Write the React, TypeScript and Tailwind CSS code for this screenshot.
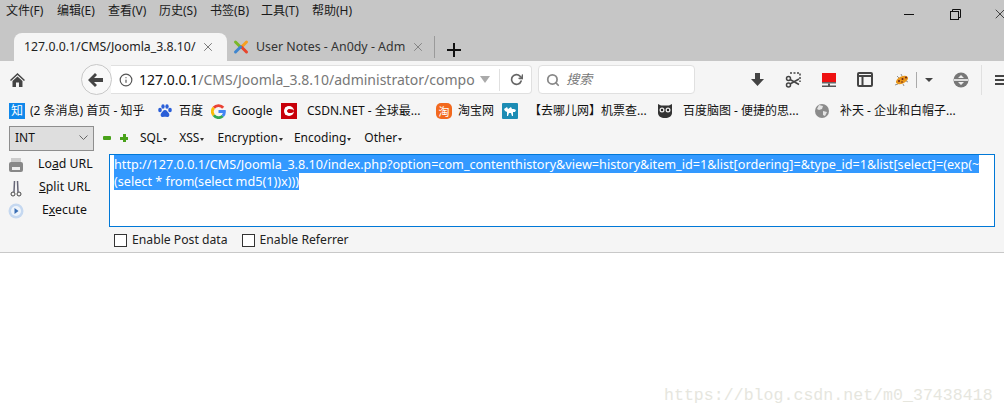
import { FiInfo, FiRotateCw, FiSearch, FiX } from "react-icons/fi";

const uiFont = "font-['Noto_Sans','Noto_Sans_CJK_SC',sans-serif]";

const menus = ["文件(F)", "编辑(E)", "查看(V)", "历史(S)", "书签(B)", "工具(T)", "帮助(H)"];

function BookmarkIcon({ kind }: { kind: string }) {
  if (kind === "zhihu")
    return (
      <span className="flex h-4 w-4 items-center justify-center bg-[#0f88eb] text-[12px] leading-none text-white">
        知
      </span>
    );
  if (kind === "baidu")
    return (
      <svg width="16" height="16" viewBox="0 0 16 16">
        <ellipse cx="3" cy="7" rx="1.8" ry="2.3" fill="#2a5fd8" />
        <ellipse cx="6" cy="3.5" rx="1.7" ry="2.3" fill="#2a5fd8" />
        <ellipse cx="10" cy="3.5" rx="1.7" ry="2.3" fill="#2a5fd8" />
        <ellipse cx="13" cy="7" rx="1.8" ry="2.3" fill="#2a5fd8" />
        <path d="M8 7c-2 0-2.5 2-4 3.500C3 12 4 14.500 6 14c1-.2 3-.2 4 0 2 .5 3-2 2-3.500C10.500 9 10 7 8 7z" fill="#2a5fd8" />
      </svg>
    );
  if (kind === "google")
    return (
      <svg width="15" height="15" viewBox="0 0 16 16" fill="none" strokeWidth="3">
        <path d="M13 4a6.300 6.300 0 0 0-5-2.300A6.300 6.300 0 0 0 3 4" stroke="#ea4335" />
        <path d="M3 4a6.300 6.300 0 0 0 0 8" stroke="#fbbc05" />
        <path d="M3 12a6.300 6.300 0 0 0 9.500.8" stroke="#34a853" />
        <path d="M12.500 12.800A6 6 0 0 0 14.300 8H8" stroke="#4285f4" />
      </svg>
    );
  if (kind === "csdn")
    return (
      <span className="flex h-4 w-4 items-center justify-center bg-[#c8000a]">
        <span className="h-2.5 w-2.5 rounded-full border-[3px] border-r-0 border-white" />
      </span>
    );
  if (kind === "taobao")
    return (
      <span className="flex h-4 w-4 items-center justify-center rounded-[5px] bg-[#f2691e] text-[11px] leading-none text-white">
        淘
      </span>
    );
  if (kind === "qunar")
    return (
      <svg width="16" height="16" viewBox="0 0 16 16">
        <rect width="16" height="16" rx="1" fill="#1c8cb4" />
        <path d="M2 6l3-2 1 2 3-2 1 2h2l2 1-1 2-2 0v4h-1l-1-3H7l-1 3H5V9L3 8z" fill="#fff" />
      </svg>
    );
  if (kind === "owl")
    return (
      <svg width="16" height="16" viewBox="0 0 16 16">
        <path d="M1 1l3 1.500h8L15 1v9c0 3-3 5-7 5s-7-2-7-5z" fill="#333" />
        <circle cx="5" cy="7" r="2.500" fill="#eee" />
        <circle cx="11" cy="7" r="2.500" fill="#eee" />
        <circle cx="5" cy="7" r="1.200" fill="#222" />
        <circle cx="11" cy="7" r="1.200" fill="#222" />
      </svg>
    );
  return (
    <svg width="16" height="16" viewBox="0 0 16 16">
      <circle cx="8" cy="8" r="7" fill="#8b8b8b" />
      <path d="M5 2l4 1-1 3-3 1-2-1zM9 8l4 1-2 4-2-1z" fill="#e4e4e4" />
    </svg>
  );
}

const bookmarks = [
  { kind: "zhihu", label: "(2 条消息) 首页 - 知乎", w: "w-[148px]", gap: "ml-[5px]" },
  { kind: "baidu", label: "百度", w: "w-[54px]", gap: "ml-[6px]" },
  { kind: "google", label: "Google", w: "w-[70px]", gap: "ml-[6px]" },
  { kind: "csdn", label: "CSDN.NET - 全球最...", w: "w-[155px]", gap: "ml-[10px]" },
  { kind: "taobao", label: "淘宝网", w: "w-[66px]", gap: "ml-[6px]" },
  { kind: "qunar", label: "【去哪儿网】机票查...", w: "w-[155px]", gap: "ml-[11px]" },
  { kind: "owl", label: "百度脑图 - 便捷的思...", w: "w-[157px]", gap: "ml-[10px]" },
  { kind: "globe", label: "补天 - 企业和白帽子...", w: "w-[150px]", gap: "ml-[10px]" },
];

function Caret() {
  return <span className="ml-px mt-0.5 h-0 w-0 border-x-2 border-t-[3px] border-x-transparent border-t-[#333]" />;
}

function JoomlaIcon() {
  return (
    <svg width="16" height="16" viewBox="0 0 16 16" fill="none" strokeWidth="3" strokeLinecap="round">
      <path d="M2.500 3l5 5" stroke="#7ab829" />
      <path d="M13.500 3l-5 5" stroke="#f6a021" />
      <path d="M13.500 13l-5-5" stroke="#e8452c" />
      <path d="M2.500 13l5-5" stroke="#3f86cf" />
    </svg>
  );
}

export default function App() {
  return (
    <div className={`relative h-[415px] w-[1004px] overflow-hidden bg-white text-black ${uiFont}`}>
      {/* title and tabs */}
      <div className="h-[61px] bg-[#c6c6c6]">
        <div className="flex h-[28px] items-center justify-between">
          <div className="flex items-center gap-[12px] pb-1.5 pl-[6px] text-[12px] leading-none text-[#1a1a1a]">
            {menus.map((m) => (
              <span key={m} className="w-[39px] whitespace-nowrap">
                {m}
              </span>
            ))}
          </div>
          <div className="-mr-[4px] flex items-center text-[#222]">
            <span className="h-px w-[10px] bg-[#111]" />
            <svg className="ml-[36px]" width="11" height="11" viewBox="0 0 11 11" fill="none" stroke="#111">
              <rect x=".5" y="2.500" width="8" height="8" />
              <path d="M2.500 2.500V.5h8v8h-2" />
            </svg>
            <FiX className="ml-[31px] h-4 w-4" strokeWidth={1.2} />
          </div>
        </div>
        <div className="flex h-[33px] items-end pl-[14px]">
          <div className="flex h-[28px] w-[213px] items-center rounded-t-[8px] bg-[#f5f5f5] pl-[10px] pr-[12px] text-[12.300px]">
            <span className="whitespace-nowrap text-[#222]">127.0.0.1/CMS/Joomla_3.8.10/</span>
            <FiX className="ml-auto h-[14px] w-[14px] text-[#444]" strokeWidth={1.2} />
          </div>
          <div className="flex h-[28px] w-[207px] items-center pl-[6px] text-[12.400px] text-[#333]">
            <JoomlaIcon />
            <span className="ml-[7px] w-[151px] whitespace-nowrap">User Notes - An0dy - Adm</span>
            <FiX className="ml-[4px] h-[14px] w-[14px] text-[#666]" strokeWidth={1.2} />
          </div>
          <div className="mb-[3px] h-[22px] w-px bg-[#9a9a9a]" />
          <div className="mb-[4px] ml-[12px] text-[0px]">
            <svg width="14" height="14" viewBox="0 0 14 14" stroke="#111" strokeWidth="2">
              <path d="M7 0v14M0 7h14" />
            </svg>
          </div>
        </div>
      </div>

      {/* navigation */}
      <div className="flex h-[36px] items-center bg-[#f5f5f5] pl-[10px] pt-px">
        <svg width="15" height="14" viewBox="0 0 15 14" fill="#444">
          <path d="M7.500 0L15 7l-1 1-6.500-6L1 8 0 7z" />
          <path d="M2.500 8l5-4.500 5 4.500v6H9V9.500H6V14H2.500z" />
        </svg>
        <div className="relative ml-[86px] flex h-[29px] w-[422px] items-center rounded-r-sm border border-l-0 border-[#e0e0e0] bg-white pl-[8px] text-[#555]">
          <FiInfo className="h-[14px] w-[14px]" />
          <span className="ml-[6px] w-[336px] overflow-hidden whitespace-nowrap text-[14px] text-[#777]">
            <span className="text-[#111]">127.0.0.1</span>/CMS/Joomla_3.8.10/administrator/compo
          </span>
          <span className="ml-[5px] h-0 w-0 border-x-[5px] border-t-[7px] border-x-transparent border-t-[#aaa]" />
          <span className="ml-[9px] h-[22px] w-px bg-[#e0e0e0]" />
          <FiRotateCw className="ml-[10px] h-[13px] w-[13px] text-[#666]" strokeWidth={3} />
          <div className="absolute -left-[30px] top-[-2px] flex h-[31px] w-[31px] items-center justify-center rounded-full border border-[#c8c8c8] bg-[#f8f8f8]">
            <svg width="16" height="14" viewBox="0 0 16 14" fill="#444">
              <path d="M7 0l2 2-3 3h9v4H6l3 3-2 2-7-7z" />
            </svg>
          </div>
        </div>
        <div className="ml-[6px] flex h-[29px] w-[157px] items-center rounded-sm border border-[#e0e0e0] bg-white pl-[7px] text-[13px] italic text-[#777]">
          <FiSearch className="h-[14px] w-[14px] text-[#888]" strokeWidth={3} />
          <span className="ml-[6px]">搜索</span>
        </div>
        <div className="flex items-center text-[#444]">
          <svg className="ml-[55px]" width="15" height="15" viewBox="0 0 15 15" fill="#444">
            <path d="M5 1h5v6h4l-6.500 7L1 7h4z" />
          </svg>
          <svg className="ml-[20px]" width="16" height="16" viewBox="0 0 16 16" fill="none" stroke="#444" strokeWidth="1.500">
            <path d="M5 1h10v9" strokeDasharray="2 1.500" />
            <circle cx="3.500" cy="13" r="2" />
            <circle cx="3.500" cy="6.500" r="2" />
            <path d="M5 7.500l9 5M5 12l9-5" />
          </svg>
          <svg className="ml-[20px]" width="16" height="16" viewBox="0 0 16 16">
            <rect x="1" y="1" width="14" height="9" fill="#ee1111" />
            <path d="M1 10h14v1.500H1z" fill="#666" />
            <path d="M7 11.500h2v2H7zM1 13.500h14V15H1z" fill="#555" />
          </svg>
          <svg className="ml-[20px]" width="16" height="15" viewBox="0 0 16 15" fill="none" stroke="#444" strokeWidth="2">
            <rect x="1" y="1" width="14" height="13" rx="1" />
            <path d="M1 4h14M5.500 4v10" />
          </svg>
          <svg className="ml-[21px]" width="16" height="14" viewBox="0 0 16 14">
            <path d="M1 12L4 11M3 3l2 2M7 1l1 2M14 9l-2-1M10 13l-1-2" stroke="#777" strokeWidth=".8" />
            <ellipse cx="8" cy="7" rx="6.500" ry="3.500" transform="rotate(-25 8 7)" fill="#e8961a" />
            <circle cx="5" cy="8" r="1" fill="#622" />
            <circle cx="8.500" cy="6" r="1" fill="#622" />
            <circle cx="8" cy="9" r=".8" fill="#622" />
            <circle cx="12" cy="4.500" r="1" fill="#622" />
          </svg>
          <span className="ml-[6px] h-[16px] w-px bg-[#aaa]" />
          <span className="ml-[8px] h-0 w-0 border-x-[4px] border-t-[4px] border-x-transparent border-t-[#444]" />
          <svg className="ml-[20px]" width="16" height="16" viewBox="0 0 16 16">
            <circle cx="8" cy="8" r="7.500" fill="#777" />
            <path d="M1 7h14v2H1z" fill="#ddd" />
            <path d="M8 3l3 3H5zM8 13l3-3H5z" fill="#eee" />
          </svg>
          <span className="ml-[12px] h-[30px] w-px bg-[#e0e0e0]" />
          <div className="ml-[13px] flex w-[9px] flex-col gap-[2px] overflow-hidden">
            <span className="h-[2px] w-[12px] bg-[#444]" />
            <span className="h-[2px] w-[12px] bg-[#444]" />
            <span className="h-[2px] w-[12px] bg-[#444]" />
          </div>
        </div>
      </div>

      {/* bookmarks */}
      <div className="flex h-[27px] items-center bg-[#f5f5f5] pl-[9px] pt-px text-[12px] text-[#111]">
        {bookmarks.map((b) => (
          <div key={b.label} className={`flex shrink-0 items-center whitespace-nowrap ${b.w}`}>
            <BookmarkIcon kind={b.kind} />
            <span className={b.gap}>{b.label}</span>
          </div>
        ))}
      </div>

      {/* hackbar */}
      <div className="h-[129px] border-b border-[#c8c8c8] bg-[#f5f5f5]">
        <div className="flex h-[28px] items-center pl-[9px] text-[12px] text-[#111]">
          <div className="flex h-[25px] w-[85px] items-center justify-between border border-[#8e8e8e] bg-[#dedede] pl-[5px] pr-[5px]">
            <span>INT</span>
            <svg width="9" height="6" viewBox="0 0 9 6" fill="none" stroke="#666">
              <path d="M.5.5l4 4 4-4" />
            </svg>
          </div>
          <span className="ml-[9px] h-[4px] w-[8px] rounded-[1px] bg-[#49a21a]" />
          <span className="relative ml-[9px] h-[8px] w-[8px]">
            <span className="absolute left-0 top-[2.5px] h-[3px] w-[8px] bg-[#49a21a]" />
            <span className="absolute left-[2.5px] top-0 h-[8px] w-[3px] bg-[#49a21a]" />
          </span>
          <div className="ml-[12px] flex items-center">
            <span>SQL</span>
            <Caret />
          </div>
          <div className="ml-[12px] flex items-center">
            <span>XSS</span>
            <Caret />
          </div>
          <div className="ml-[13px] flex items-center">
            <span>Encryption</span>
            <Caret />
          </div>
          <div className="ml-[11px] flex items-center">
            <span>Encoding</span>
            <Caret />
          </div>
          <div className="ml-[13px] flex items-center">
            <span>Other</span>
            <Caret />
          </div>
        </div>
        <div className="flex">
          <div className="w-[109px] pt-px text-[12.300px] text-[#111]">
            <div className="flex h-[23px] items-center">
              <svg className="ml-[8px]" width="16" height="16" viewBox="0 0 16 16">
                <rect x="3" y="1" width="10" height="5" fill="#ccc" />
                <rect x="1" y="5" width="14" height="10" rx="2" fill="#888" />
                <rect x="4" y="10" width="8" height="3" fill="#eee" />
              </svg>
              <span className="ml-[14px]">
                Lo<span className="underline">a</span>d URL
              </span>
            </div>
            <div className="flex h-[23px] items-center">
              <svg className="ml-[8px]" width="16" height="18" viewBox="0 0 16 18" fill="none" stroke="#444">
                <circle cx="5" cy="15" r="2" />
                <circle cx="11" cy="15" r="2" />
                <path d="M6 13L6.500 2M10 13L9.500 2" stroke="#667" strokeWidth="1.500" />
              </svg>
              <span className="ml-[15px]">
                <span className="underline">S</span>plit URL
              </span>
            </div>
            <div className="flex h-[23px] items-center">
              <svg className="ml-[8px]" width="16" height="16" viewBox="0 0 16 16">
                <circle cx="8" cy="8" r="7.500" fill="#c5d8f0" />
                <circle cx="8" cy="8" r="5" fill="#eef4fb" />
                <path d="M6.500 5l4 3-4 3z" fill="#3a6fb5" />
              </svg>
              <span className="ml-[18px]">
                E<span className="underline">x</span>ecute
              </span>
            </div>
          </div>
          <div className="flex-1 pr-[9px]">
            <div className="mt-[2px] h-[73px] w-[886px] border border-[#0078d7] bg-white px-[4px] pt-px text-[12.650px] leading-[17px] text-white">
              <span className="whitespace-nowrap bg-[#3399ff]">
                http://127.0.0.1/CMS/Joomla_3.8.10/index.php?option=com_contenthistory&amp;view=history&amp;item_id=1&amp;list[ordering]=&amp;type_id=1&amp;list[select]=(exp(~
              </span>
              <br />
              <span className="whitespace-nowrap bg-[#3399ff]">(select * from(select md5(1))x)))</span>
            </div>
            <div className="mt-px flex h-[24px] items-center pl-[5px] text-[12.200px] text-[#222]">
              <span className="h-[13px] w-[13px] border border-[#333] bg-white" />
              <span className="ml-[5px]">Enable Post data</span>
              <span className="ml-[14px] h-[13px] w-[13px] border border-[#333] bg-white" />
              <span className="ml-[5px]">Enable Referrer</span>
            </div>
          </div>
        </div>
      </div>

      {/* blog watermark */}
      <div className="absolute left-[664px] top-[386px] font-['Liberation_Mono',monospace] text-[16.600px] leading-5 text-[#e6e6de]">
        https://blog.csdn.net/m0_37438418
      </div>
    </div>
  );
}
